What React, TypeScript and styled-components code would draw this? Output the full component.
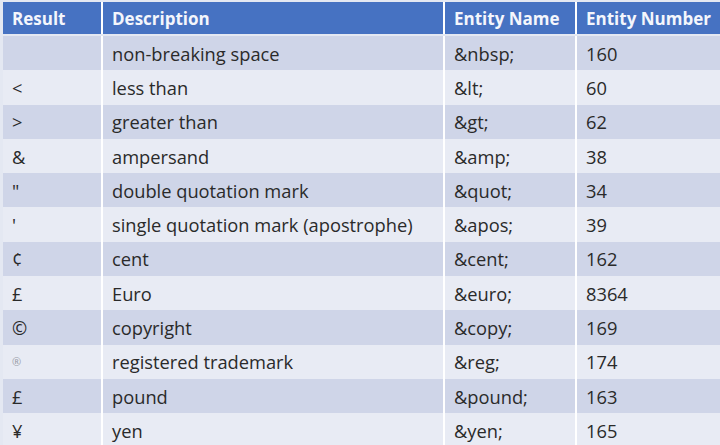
import React from 'react'
import styled, { createGlobalStyle } from 'styled-components'

const GlobalStyle = createGlobalStyle`
    html, body {
        margin: 0;
        padding: 0;
        background: #ffffff;
    }
`

const entities = [
    { result: '\u00a0', desc: 'non-breaking space', name: '&nbsp;', num: '160' },
    { result: '<', desc: 'less than', name: '&lt;', num: '60' },
    { result: '>', desc: 'greater than', name: '&gt;', num: '62' },
    { result: '&', desc: 'ampersand', name: '&amp;', num: '38' },
    { result: '"', desc: 'double quotation mark', name: '&quot;', num: '34' },
    { result: "'", desc: 'single quotation mark (apostrophe)', name: '&apos;', num: '39' },
    { result: '¢', desc: 'cent', name: '&cent;', num: '162' },
    { result: '£', desc: 'Euro', name: '&euro;', num: '8364' },
    { result: '©', desc: 'copyright', name: '&copy;', num: '169' },
    { result: '®', desc: 'registered trademark', name: '&reg;', num: '174', small: true },
    { result: '£', desc: 'pound', name: '&pound;', num: '163' },
    { result: '¥', desc: 'yen', name: '&yen;', num: '165' },
]

const STable = styled.div`
    display: flex;
    flex-direction: column;
    padding: 2px 0 0 3px;
    background: #e4e8f2;
    width: 720px;
    box-sizing: border-box;
    font-family: 'Open Sans', Lato, sans-serif;
`

const SRow = styled.div<{ $header?: boolean }>`
    display: grid;
    grid-template-columns: 98px 340px 130px 1fr;
    column-gap: 2px;
    height: ${p => (p.$header ? '32px' : '34.3px')};
    margin-bottom: ${p => (p.$header ? '2px' : '0')};
    background: #ffffff;
`

const SCell = styled.div<{ $header?: boolean; $odd?: boolean; $small?: boolean }>`
    display: flex;
    align-items: center;
    padding-left: 9px;
    background: ${p => (p.$header ? '#4672c2' : p.$odd ? '#cfd5e8' : '#e8ebf4')};
    color: ${p => (p.$header ? '#f4f6fc' : p.$small ? '#9a9ca6' : '#2a2a2a')};
    font-size: ${p => (p.$small ? '11px' : p.$header ? '17px' : '18.3px')};
    font-weight: ${p => (p.$header ? 700 : 400)};
    white-space: nowrap;
`

export default function App() {
    return (
        <>
            <GlobalStyle />
            <STable>
                <SRow $header>
                    <SCell $header>Result</SCell>
                    <SCell $header>Description</SCell>
                    <SCell $header>Entity Name</SCell>
                    <SCell $header>Entity Number</SCell>
                </SRow>
                {entities.map((e, i) => (
                    <SRow key={i}>
                        <SCell $odd={i % 2 === 0} $small={e.small}>{e.result}</SCell>
                        <SCell $odd={i % 2 === 0}>{e.desc}</SCell>
                        <SCell $odd={i % 2 === 0}>{e.name}</SCell>
                        <SCell $odd={i % 2 === 0}>{e.num}</SCell>
                    </SRow>
                ))}
            </STable>
        </>
    )
}
